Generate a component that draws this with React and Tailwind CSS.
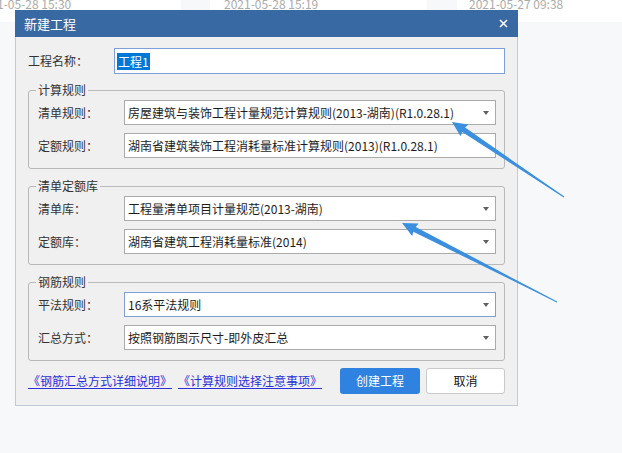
import React from "react";

const FONT = "font-['Noto_Sans_CJK_SC','Microsoft_YaHei',sans-serif]";

// arrow polygon from tip (tx,ty) to tail end (ex,ey)
const arrowPoints = (tx, ty, ex, ey) => {
  const dx = ex - tx;
  const dy = ey - ty;
  const len = Math.hypot(dx, dy);
  const ux = dx / len;
  const uy = dy / len;
  const nx = -uy;
  const ny = ux;
  const head = 15;
  const half = 7;
  const bx = tx + ux * head;
  const by = ty + uy * head;
  const pts = [
    [tx, ty],
    [bx + nx * half, by + ny * half],
    [bx - ux * 1 + nx * 2.6, by - uy * 1 + ny * 2.6],
    [ex + nx * 0.5, ey + ny * 0.5],
    [ex - nx * 0.5, ey - ny * 0.5],
    [bx - ux * 1 - nx * 2.6, by - uy * 1 - ny * 2.6],
    [bx - nx * half, by - ny * half],
  ];
  return pts.map((p) => p.map((v) => v.toFixed(1)).join(",")).join(" ");
};

const Caret = () => (
  <span className="w-0 h-0 border-x-[3px] border-x-transparent border-t-[4px] border-t-[#606060]" />
);

const Field = ({ label, value, caret = true, focused = false }) => (
  <div className="flex items-center">
    <span className="w-[86px] shrink-0 text-[#333]">{label}</span>
    <div
      className={`flex-1 h-[25px] bg-white border flex items-center pl-[3px] pr-[6px] ${
        focused ? "border-[#7f9fd8]" : "border-[#ababab]"
      }`}
    >
      <span className="flex-1 text-[#1c1c1c] whitespace-nowrap">{value}</span>
      {caret && <Caret />}
    </div>
  </div>
);

const Group = ({ title, className = "", children }) => (
  <fieldset
    className={`border border-[#b9b9b9] rounded-[3px] pl-[9px] pr-[8px] pt-[2px] pb-[10px] ${className}`}
  >
    <legend className="-ml-[2px] px-[2px] leading-[16px] text-[#333]">{title}</legend>
    <div className="flex flex-col gap-[8px]">{children}</div>
  </fieldset>
);

export default function App() {
  return (
    <div
      className={`relative w-[622px] h-[453px] overflow-hidden bg-[#f7f8fa] text-[12px] ${FONT}`}
    >
      {/* list behind the dialog */}
      <div className="flex h-[22px] bg-white text-[#ababab] text-[12px] leading-[16px]">
        <div className="w-[181px] overflow-hidden">
          <div className="-mt-[4px] -ml-[23px] whitespace-nowrap">2021-05-28 15:30</div>
        </div>
        <div className="w-[29px] bg-[#f7f8fa]" />
        <div className="w-[217px] pl-[14px]">
          <div className="-mt-[4px] whitespace-nowrap">2021-05-28 15:19</div>
        </div>
        <div className="w-[30px] bg-[#f7f8fa]" />
        <div className="flex-1 pl-[12px]">
          <div className="-mt-[4px] whitespace-nowrap">2021-05-27 09:38</div>
        </div>
      </div>

      {/* dialog */}
      <div className="absolute left-[15px] top-[10px] w-[503px] h-[396px] flex flex-col">
        <div className="h-[27px] bg-[#3869a3] flex items-center justify-between pl-[9px] pr-[10px]">
          <span className="text-white text-[13px]">新建工程</span>
          <svg width="9" height="9" viewBox="0 0 9 9">
            <path d="M1 1L8 8M8 1L1 8" stroke="#fff" strokeWidth="1.6" />
          </svg>
        </div>
        <div className="flex-1 bg-[#f0f0f0] border-x border-b border-[#c4cad5] pl-[12px] pr-[12px] pt-[11px]">
          <div className="flex items-center">
            <span className="w-[86px] shrink-0 text-[#333]">工程名称：</span>
            <div className="flex-1 h-[26px] bg-white border border-[#7f9fdc] flex items-center pl-[2px]">
              <span className="bg-[#0078d7] text-white leading-[17px] px-[1px]">工程1</span>
            </div>
          </div>

          <Group title="计算规则" className="mt-[8px]">
            <Field label="清单规则：" value="房屋建筑与装饰工程计量规范计算规则(2013-湖南)(R1.0.28.1)" />
            <Field label="定额规则：" value="湖南省建筑装饰工程消耗量标准计算规则(2013)(R1.0.28.1)" caret={false} />
          </Group>

          <Group title="清单定额库" className="mt-[9px]">
            <Field label="清单库：" value="工程量清单项目计量规范(2013-湖南)" />
            <Field label="定额库：" value="湖南省建筑工程消耗量标准(2014)" />
          </Group>

          <Group title="钢筋规则" className="mt-[9px]">
            <Field label="平法规则：" value="16系平法规则" focused />
            <Field label="汇总方式：" value="按照钢筋图示尺寸-即外皮汇总" />
          </Group>

          <div className="mt-[7px] flex items-center h-[26px]">
            <a className="text-[#2a2fd8] underline underline-offset-2">《钢筋汇总方式详细说明》</a>
            <a className="ml-[6px] text-[#2a2fd8] underline underline-offset-2">《计算规则选择注意事项》</a>
            <div className="ml-auto flex gap-[6px]">
              <button className="w-[80px] h-[26px] rounded-[3px] bg-[#2f82e0] text-white text-[12px]">
                创建工程
              </button>
              <button className="w-[79px] h-[26px] rounded-[3px] bg-white border border-[#c9c9c9] text-[#111] text-[12px]">
                取消
              </button>
            </div>
          </div>
        </div>
      </div>

      {/* annotation arrows */}
      <svg className="absolute inset-0 pointer-events-none" width="622" height="453">
        <polygon points={arrowPoints(452, 122, 564, 197)} fill="#3a8fdf" />
        <polygon points={arrowPoints(402, 223, 557, 302)} fill="#3a8fdf" />
      </svg>
    </div>
  );
}
